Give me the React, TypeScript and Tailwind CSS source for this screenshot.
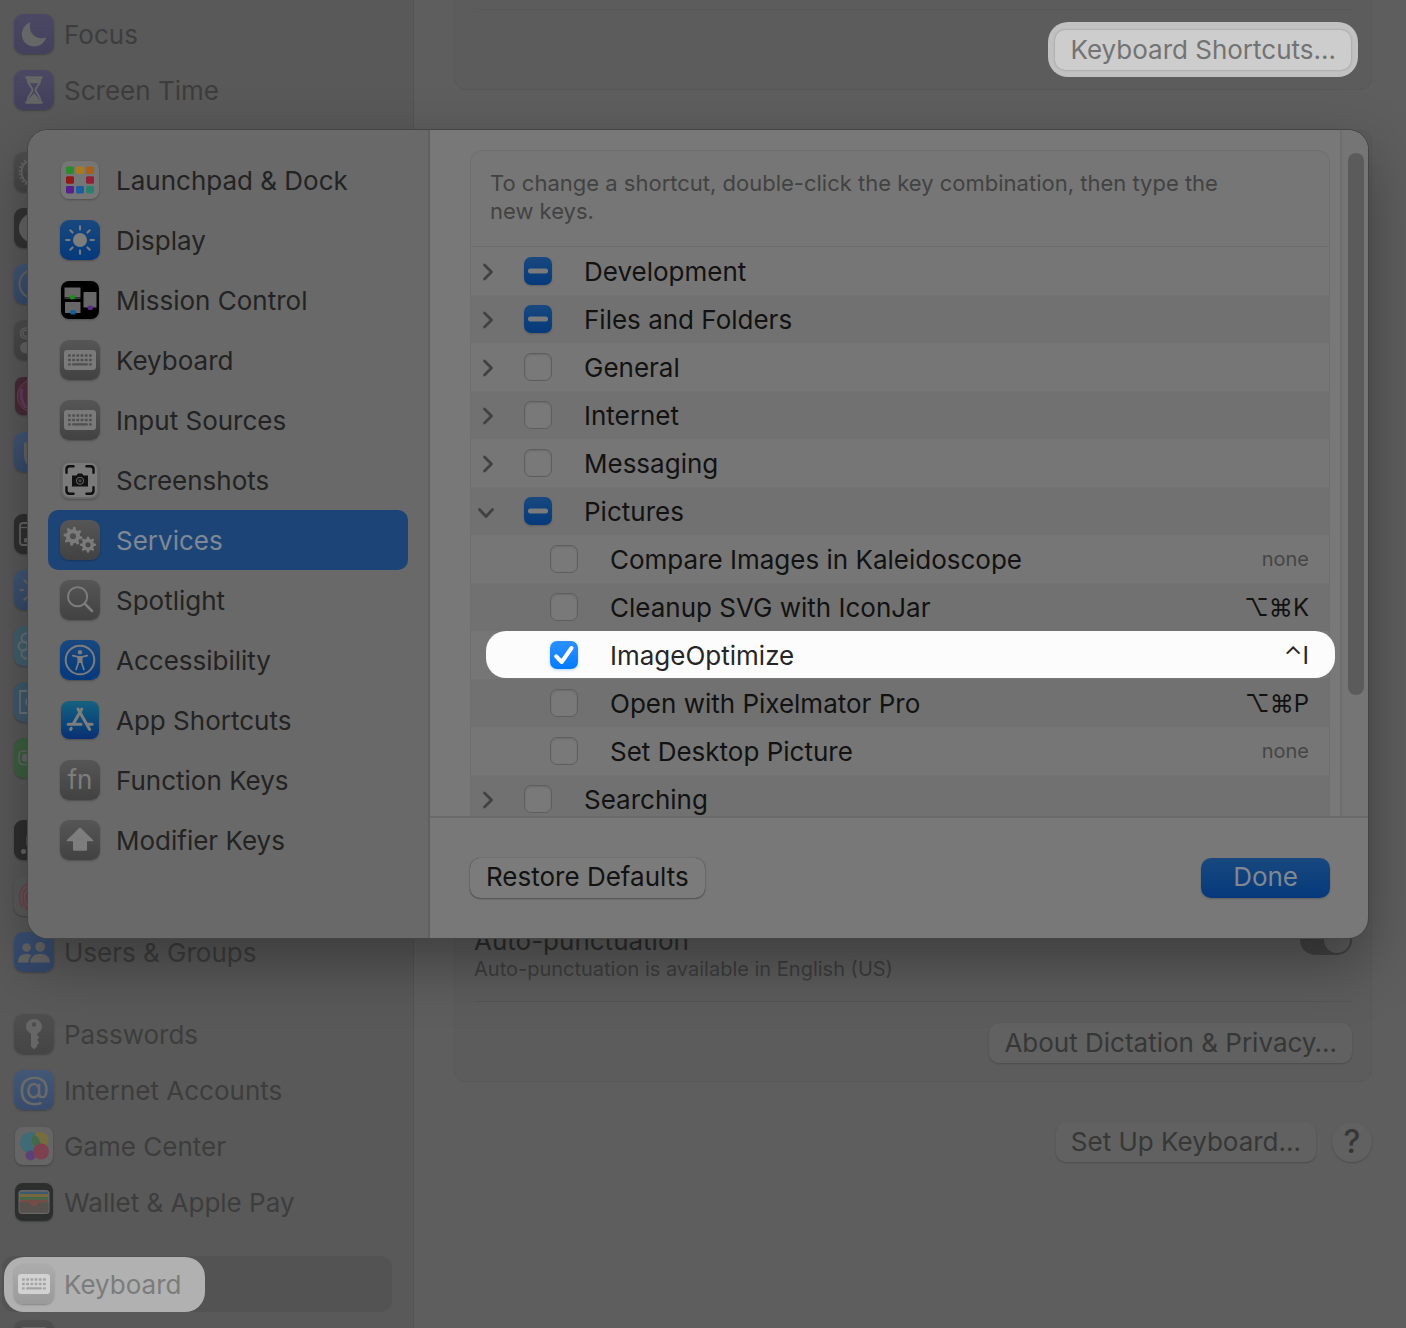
import { useEffect, useRef, useState } from "react";
import type { ReactNode } from "react";

/* ---------- icon glyphs, drawn on a 40 x 40 grid ---------- */

function Glyph({ children }: { children: ReactNode }) {
  return (
    <svg viewBox="0 0 40 40" className="size-10 shrink-0" fill="none" aria-hidden="true">
      {children}
    </svg>
  );
}

function Tile({ className, inset, children }: { className: string; inset?: boolean; children: ReactNode }) {
  return (
    <span
      className={`flex shrink-0 items-center justify-center shadow-[0_1px_2px_rgba(0,0,0,0.25)] ${
        inset ? "m-px size-[38px] rounded-lg" : "size-10 rounded-[9px]"
      } ${className}`}
    >
      {children}
    </span>
  );
}

const GREY = "bg-linear-to-b from-[#565656] to-[#424242]";
const BLUE = "bg-linear-to-b from-[#18487f] to-[#05397b]";
const DIM_BLUE = "bg-linear-to-b from-[#435777] to-[#384b6c]";
const DIM_GREY = "bg-linear-to-b from-[#4f4f4f] to-[#454545]";
const DIM_PURPLE = "bg-linear-to-b from-[#4b4864] to-[#43405c]";
const DIM_BLACK = "bg-[#343434]";
const DIM_CYAN = "bg-[#43606d]";

function KeyboardGlyph({ body, keys }: { body: string; keys: string }) {
  const cols = [8, 12.2, 16.4, 20.6, 24.8, 29];
  return (
    <Glyph>
      <rect x="4" y="10" width="32" height="20" rx="3" fill={body} />
      <g fill={keys}>
        {cols.map((x) => (
          <rect key={`a${x}`} x={x} y="14.3" width="2.8" height="2.4" rx="0.6" />
        ))}
        {cols.map((x) => (
          <rect key={`b${x}`} x={x} y="18.8" width="2.8" height="2.4" rx="0.6" />
        ))}
        <rect x="8" y="23.2" width="2.8" height="2.4" rx="0.6" />
        <rect x="12.2" y="23.2" width="15.6" height="2.4" rx="0.6" />
        <rect x="29" y="23.2" width="2.8" height="2.4" rx="0.6" />
      </g>
    </Glyph>
  );
}

function Sun({ color }: { color: string }) {
  return (
    <Glyph>
      <circle cx="20" cy="20" r="7" fill={color} />
      <g stroke={color} strokeWidth="2" strokeLinecap="round">
        {[0, 45, 90, 135, 180, 225, 270, 315].map((a) => (
          <path key={a} d="M20 9.5V6.2" transform={`rotate(${a} 20 20)`} />
        ))}
      </g>
    </Glyph>
  );
}

function Gear({ cx, cy, r, turn }: { cx: number; cy: number; r: number; turn: number }) {
  return (
    <g stroke="#7b7b7b">
      <circle cx={cx} cy={cy} r={r * 0.54} strokeWidth={r * 0.44} />
      {[0, 45, 90, 135, 180, 225, 270, 315].map((a) => (
        <path
          key={a}
          d={`M${cx} ${cy - r * 0.66}V${cy - r * 0.86}`}
          strokeWidth={r * 0.32}
          strokeLinecap="round"
          transform={`rotate(${a + turn} ${cx} ${cy})`}
        />
      ))}
    </g>
  );
}

function LaunchpadIcon() {
  const colors = [
    "#2b8a2c", "#a87a1c", "#a5601a",
    "#8f1a1a", "#74777a", "#8f2038",
    "#57208a", "#1b5da0", "#2a806c",
  ];
  return (
    <Tile inset className="bg-[#767676]">
      <Glyph>
        {colors.map((c, i) => (
          <rect key={c} x={6 + (i % 3) * 10} y={6.5 + Math.floor(i / 3) * 9.8} width="8" height="7.4" rx="1.4" fill={c} />
        ))}
      </Glyph>
    </Tile>
  );
}

function MissionControlIcon() {
  return (
    <Tile inset className="bg-black">
      <Glyph>
        <rect x="4.500" y="7.500" width="16" height="10" fill="#676767" />
        <rect x="5" y="22" width="15.500" height="11" fill="#676767" />
        <rect x="23.500" y="12" width="13" height="15.500" fill="#676767" />
        <rect x="4.500" y="18" width="16" height="1" fill="#3a3a3a" />
        <rect x="9.500" y="15" width="5.500" height="4.500" rx="2" fill="#218a1f" />
        <rect x="10.200" y="30" width="5.500" height="4.500" rx="1.500" fill="#165f99" />
        <rect x="27.500" y="25.500" width="5.500" height="4.500" rx="2" fill="#5c2a87" />
      </Glyph>
    </Tile>
  );
}

function ScreenshotsIcon() {
  return (
    <Tile inset className="border-2 border-[#676767] bg-[#7a7a7a]">
      <Glyph>
        <g stroke="#0f0f0f" strokeWidth="2.4" strokeLinecap="round">
          <path d="M13.500 6.300H9.500Q6.500 6.300 6.500 9.300V12.800" />
          <path d="M26.500 6.300H30.500Q33.500 6.300 33.500 9.300V12.800" />
          <path d="M13.500 33.700H9.500Q6.500 33.700 6.500 30.700V27.200" />
          <path d="M26.500 33.700H30.500Q33.500 33.700 33.500 30.700V27.200" />
        </g>
        <path d="M12 15.500h4.500l1.500-2h4l1.500 2H28V26.500H12Z" fill="#111" />
        <circle cx="20" cy="20.800" r="3.600" stroke="#6c6c6c" strokeWidth="1" />
        <circle cx="20" cy="20.800" r="1.600" fill="#4a4a4a" />
      </Glyph>
    </Tile>
  );
}

const W = "#7d7d7d";

const paneItems: { label: string; icon: ReactNode }[] = [
  { label: "Launchpad & Dock", icon: <LaunchpadIcon /> },
  { label: "Display", icon: <Tile className={BLUE}><Sun color={W} /></Tile> },
  { label: "Mission Control", icon: <MissionControlIcon /> },
  { label: "Keyboard", icon: <Tile className={GREY}><KeyboardGlyph body="#7a7a7a" keys="#505050" /></Tile> },
  { label: "Input Sources", icon: <Tile className={GREY}><KeyboardGlyph body="#7a7a7a" keys="#505050" /></Tile> },
  { label: "Screenshots", icon: <ScreenshotsIcon /> },
  {
    label: "Services",
    icon: (
      <Tile className={GREY}>
        <Glyph>
          <Gear cx={13} cy={16.300} r={9.400} turn={10} />
          <Gear cx={28} cy={24.700} r={8} turn={0} />
        </Glyph>
      </Tile>
    ),
  },
  {
    label: "Spotlight",
    icon: (
      <Tile className={GREY}>
        <Glyph>
          <circle cx="17.600" cy="16.700" r="9.600" stroke={W} strokeWidth="1.900" />
          <path d="M24.700 23.700L32 31" stroke={W} strokeWidth="2.600" strokeLinecap="round" />
        </Glyph>
      </Tile>
    ),
  },
  {
    label: "Accessibility",
    icon: (
      <Tile className={BLUE}>
        <Glyph>
          <circle cx="20" cy="20" r="14.300" stroke={W} strokeWidth="2" />
          <circle cx="20" cy="12.200" r="2.200" fill={W} />
          <path
            d="M12.800 15.600l5.200 1.300h4l5.200-1.300M18.400 17v5.500l-2.300 7M21.600 17v5.500l2.300 7"
            stroke={W}
            strokeWidth="1.700"
            strokeLinecap="round"
            strokeLinejoin="round"
          />
          <path d="M17.700 17h4.600v6h-4.600z" fill={W} />
        </Glyph>
      </Tile>
    ),
  },
  {
    label: "App Shortcuts",
    icon: (
      <Tile inset className="bg-linear-to-b from-[#17627f] to-[#0b2f74]">
        <Glyph>
          <g stroke={W} strokeWidth="3" strokeLinecap="round">
            <path d="M21.800 9L13.500 23.500" />
            <path d="M18 9L29.700 29.500" />
            <path d="M8.200 24.300H21" />
            <path d="M27.500 24.300H32" />
            <path d="M11.300 28.300L10.600 29.500" />
          </g>
        </Glyph>
      </Tile>
    ),
  },
  {
    label: "Function Keys",
    icon: (
      <Tile className={GREY}>
        <span className="text-[26px] leading-8 text-[#7d7d7d]">fn</span>
      </Tile>
    ),
  },
  {
    label: "Modifier Keys",
    icon: (
      <Tile className={GREY}>
        <Glyph>
          <path
            d="M20 7.200L33.300 20.300Q33.800 21.300 32.800 21.300H27V29.500Q27 30.700 25.800 30.700H14.200Q13 30.700 13 29.500V21.300H7.200Q6.200 21.300 6.700 20.300Z"
            fill={W}
          />
        </Glyph>
      </Tile>
    ),
  },
];

/* ---------- sidebar of the window behind the sheet ---------- */

const D = "#666666";

type SideItem = { id: string; label?: string; icon: ReactNode; current?: boolean };

const sideGroups: SideItem[][] = [
  [
    {
      id: "focus",
      label: "Focus",
      icon: (
        <Tile className={DIM_PURPLE}>
          <Glyph>
            <path
              d="M16.500 8.200C16 9.500 15.800 10.800 15.800 12.200C15.800 19 20.800 24.200 27.600 24.200C29.300 24.200 30.800 23.900 32.300 23.300C30.700 28.700 26 32.500 20.200 32.500C13.300 32.500 7.800 27 7.800 20.200C7.800 14.500 11.500 9.700 16.500 8.200Z"
              fill={D}
            />
          </Glyph>
        </Tile>
      ),
    },
    {
      id: "screen-time",
      label: "Screen Time",
      icon: (
        <Tile className={DIM_PURPLE}>
          <Glyph>
            <g stroke={D} strokeWidth="2" strokeLinejoin="round" strokeLinecap="round">
              <path d="M12.500 7.500H27.500M12.500 32.500H27.500" strokeWidth="2.600" />
              <path d="M13.500 8.500C13.500 15.500 18.500 17 18.500 20C18.500 23 13.500 24.500 13.500 31.500" />
              <path d="M26.500 8.500C26.500 15.500 21.500 17 21.500 20C21.500 23 26.500 24.500 26.500 31.500" />
            </g>
            <path d="M13.500 8.500h13q0 3-1.300 4.700H14.800Q13.500 11.500 13.500 8.500ZM20 19v4l-4 4.500q-1.500 1.800-1.500 4h11q0-2.200-1.500-4L20 23Z" fill={D} />
          </Glyph>
        </Tile>
      ),
    },
  ],
  [
    {
      id: "general",
      icon: (
        <Tile className={DIM_GREY}>
          <Glyph>
            <circle cx="20" cy="20" r="12.500" stroke={D} strokeWidth="1.800" />
            <circle cx="20" cy="20" r="14.500" stroke={D} strokeWidth="2" strokeDasharray="1.900 1.900" />
          </Glyph>
        </Tile>
      ),
    },
    { id: "appearance", icon: <Tile className={DIM_BLACK}><Glyph><circle cx="20" cy="20" r="15" fill={D} /></Glyph></Tile> },
    { id: "accessibility", icon: <Tile className={DIM_BLUE}><Glyph><circle cx="20" cy="20" r="14.500" stroke={D} strokeWidth="2" /></Glyph></Tile> },
    {
      id: "control-center",
      icon: (
        <Tile className={DIM_GREY}>
          <Glyph>
            <rect x="6.500" y="8" width="27" height="10.500" rx="5.200" stroke={D} strokeWidth="1.600" />
            <circle cx="12" cy="13.300" r="3" stroke={D} strokeWidth="1.500" />
            <rect x="6" y="22" width="28" height="11.500" rx="5.700" fill={D} />
          </Glyph>
        </Tile>
      ),
    },
    {
      id: "siri",
      icon: (
        <Tile inset className="bg-[#482b38]">
          <Glyph>
            <circle cx="20" cy="20" r="16.500" fill="#57303f" stroke="#6b4653" strokeWidth="1" />
            <path d="M8 13Q5 22 12 32" stroke="#5f4063" strokeWidth="3" />
          </Glyph>
        </Tile>
      ),
    },
    {
      id: "privacy",
      icon: (
        <Tile className={DIM_BLUE}>
          <Glyph>
            <path d="M12 12V24Q12 32 20 33" stroke={D} strokeWidth="4" strokeLinecap="round" />
          </Glyph>
        </Tile>
      ),
    },
  ],
  [
    {
      id: "desktop",
      icon: (
        <Tile className="bg-[#303030]">
          <Glyph>
            <rect x="6" y="9" width="28" height="22" rx="3" stroke={D} strokeWidth="1.800" />
            <path d="M6 13.500H34" stroke={D} strokeWidth="1.400" />
            <rect x="10" y="24" width="20" height="4.500" rx="1.500" fill={D} />
          </Glyph>
        </Tile>
      ),
    },
    { id: "displays", icon: <Tile className={DIM_BLUE}><Sun color={D} /></Tile> },
    {
      id: "wallpaper",
      icon: (
        <Tile className={DIM_CYAN}>
          <Glyph>
            <g stroke="#6b7377" strokeWidth="1.800">
              <circle cx="12" cy="12" r="4.500" />
              <circle cx="9" cy="20" r="4.500" />
              <circle cx="12" cy="28" r="4.500" />
            </g>
          </Glyph>
        </Tile>
      ),
    },
    {
      id: "screen-saver",
      icon: (
        <Tile className="bg-[#3f5a6c]">
          <Glyph>
            <path d="M20 9H6V31H20" stroke="#6b7377" strokeWidth="1.800" />
            <circle cx="16" cy="20" r="4" stroke="#6b7377" strokeWidth="1.600" />
          </Glyph>
        </Tile>
      ),
    },
    {
      id: "battery",
      icon: (
        <Tile className="bg-[#3d6040]">
          <Glyph>
            <rect x="5" y="13" width="28" height="13.500" rx="4" stroke={D} strokeWidth="1.700" />
            <rect x="8" y="16" width="20" height="7.500" rx="2" fill={D} />
          </Glyph>
        </Tile>
      ),
    },
  ],
  [
    {
      id: "lock-screen",
      icon: (
        <Tile className="bg-[#2f2f2f]">
          <Glyph>
            <rect x="12" y="14" width="16" height="13" rx="3" fill="#4a4a4a" />
            <circle cx="9.500" cy="31.500" r="2.500" fill={D} />
          </Glyph>
        </Tile>
      ),
    },
    {
      id: "touch-id",
      icon: (
        <Tile className="bg-[#5b5b5b]">
          <Glyph>
            <g stroke="#7a3c48" strokeWidth="1.300" strokeLinecap="round">
              <path d="M14 7Q5 13 5.500 21Q5.500 27 8 30" />
              <path d="M16 10Q8.500 14 9 21Q9 28 13 33" />
              <path d="M18 13Q12 16 12.300 21Q12.500 28 17 33" />
            </g>
          </Glyph>
        </Tile>
      ),
    },
    {
      id: "users",
      label: "Users & Groups",
      icon: (
        <Tile className="bg-linear-to-b from-[#3c5174] to-[#33486c]">
          <Glyph>
            <g fill="#666666">
              <circle cx="12.600" cy="15.500" r="4.300" />
              <path d="M4 30.500Q4 22 12.500 21.700Q15.500 21.700 17.500 23.200Q14.500 26 14.300 30.500Z" />
              <circle cx="26.200" cy="14.800" r="4.900" />
              <path d="M16 30.500Q17 21.800 26 21.800Q35 21.800 36 29.500Q36 30.500 35 30.500Z" />
            </g>
          </Glyph>
        </Tile>
      ),
    },
  ],
  [
    {
      id: "passwords",
      label: "Passwords",
      icon: (
        <Tile className={DIM_GREY}>
          <Glyph>
            <path
              fillRule="evenodd"
              d="M20 5C24.500 5 28 8.300 28 12.500C28 15.700 26.200 18.300 23.300 19.500V21.500L25.300 23.500L23 26L25.300 28.700L23 31V32.500L20 35.200L17 32.500V19.500C14 18.300 12 15.700 12 12.500C12 8.300 15.500 5 20 5ZM20 8.300A2.200 2.200 0 1 0 20 12.700A2.200 2.200 0 1 0 20 8.300Z"
              fill={D}
            />
          </Glyph>
        </Tile>
      ),
    },
    {
      id: "internet-accounts",
      label: "Internet Accounts",
      icon: (
        <Tile className={DIM_BLUE}>
          <span className="pb-1 text-[32px] leading-9 text-[#6a6a6a]">@</span>
        </Tile>
      ),
    },
    {
      id: "game-center",
      label: "Game Center",
      icon: (
        <Tile inset className="bg-[#656565]">
          <Glyph>
            <circle cx="16.500" cy="16.500" r="10.500" fill="#3f6a78" />
            <circle cx="26" cy="14.500" r="8.500" fill="#776c3e" />
            <path d="M20 8.500Q27 12 26.500 20Q20 22 17.800 17Q17 12 20 8.500Z" fill="#42694c" />
            <circle cx="16.500" cy="29.500" r="5" fill="#5c4177" />
            <circle cx="27" cy="25.500" r="8" fill="#7c404e" />
          </Glyph>
        </Tile>
      ),
    },
    {
      id: "wallet",
      label: "Wallet & Apple Pay",
      icon: (
        <Tile inset className="bg-[#2d2e2e]">
          <Glyph>
            <rect x="4.500" y="8" width="31" height="24" rx="3.500" fill="#666666" />
            <rect x="6" y="9.700" width="28" height="4" rx="1" fill="#3c5a70" />
            <rect x="6" y="12" width="28" height="3.500" fill="#75683f" />
            <rect x="6" y="15" width="28" height="3.500" fill="#456747" />
            <rect x="6" y="17.700" width="28" height="3" fill="#754c46" />
            <path d="M5.500 20H13.500Q15.500 20 16.500 22Q20 26 23.500 22Q24.500 20 26.500 20H34.500V29Q34.500 30.700 33 30.700H7Q5.500 30.700 5.500 29Z" fill="#56514d" />
            <path d="M14 20H26Q24.500 20.500 23.500 22Q20 26 16.500 22Q15.500 20.500 14 20Z" fill="#754c46" />
          </Glyph>
        </Tile>
      ),
    },
  ],
  [
    {
      id: "keyboard",
      label: "Keyboard",
      current: true,
      icon: (
        <Tile className="bg-linear-to-b from-[#acacac] to-[#9a9a9a]">
          <KeyboardGlyph body="#d2d2d2" keys="#a3a3a3" />
        </Tile>
      ),
    },
    {
      id: "trackpad",
      icon: (
        <Tile className={DIM_GREY}>
          <Glyph>
            <rect x="6" y="7" width="28" height="26" rx="4" fill={D} />
          </Glyph>
        </Tile>
      ),
    },
  ],
];

function SideRow({ item }: { item: SideItem }) {
  const label = <span className="pt-0.5">{item.label}</span>;
  if (item.current) {
    return (
      <a
        href="#keyboard"
        aria-current="page"
        className="mr-[21px] ml-0.5 flex h-14 items-center rounded-xl bg-[#535353]"
      >
        <span className="ml-0.5 flex h-[55px] items-center gap-2.5 rounded-[20px] bg-[#b1b1b1] pr-6 pl-2.5 text-[#7c7c7c]">
          {item.icon}
          {label}
        </span>
      </a>
    );
  }
  return (
    <a href={`#${item.id}`} aria-label={item.label ?? item.id} className="flex h-14 items-center gap-2.5 pl-3.5">
      {item.icon}
      {label}
    </a>
  );
}

function WindowSidebar() {
  return (
    <nav className="flex w-[414px] shrink-0 flex-col gap-[26px] border-r border-[#535353] bg-[#595959] pt-1.5 text-[#3d3d3d]">
      {sideGroups.map((group) => (
        <div key={group[0].id} className="flex flex-col">
          {group.map((item) => (
            <SideRow key={item.id} item={item} />
          ))}
        </div>
      ))}
    </nav>
  );
}

/* ---------- content of the window behind the sheet ---------- */

const DIM_BUTTON =
  "h-10 bg-[#616161] text-[#373737] shadow-[0_1px_2px_rgba(0,0,0,0.2)]";

function WindowContent() {
  return (
    <main className="flex min-w-0 flex-1 flex-col bg-[#5e5e5e] pr-[34px] pl-10">
      <section className="rounded-b-xl border border-t-0 border-[#595959] bg-[#5c5c5c] px-[19px] pt-[9px] pb-3">
        <div className="mb-3 border-t border-[#585858]" />
        <div className="-mr-1.5 flex justify-end">
          <div className="rounded-[20px] bg-[#c1c1c1] px-[7px] pt-2 pb-[7px]">
            <button
              type="button"
              className="flex h-10 items-center rounded-[10px] bg-[#cdcdcd] px-[15px] text-[#737373] shadow-[0_0_2px_rgba(0,0,0,0.3)]"
            >
              Keyboard Shortcuts…
            </button>
          </div>
        </div>
      </section>

      <section className="mt-10 rounded-xl border border-[#595959] bg-[#5c5c5c] px-[19px] pt-[794px] pb-[18px]">
        <div className="flex items-start justify-between">
          <div>
            <p className="leading-8 text-[#2c2c2c]">Auto-punctuation</p>
            <p className="text-[20px] leading-6 text-[#3d3d3d]">Auto-punctuation is available in English (US)</p>
          </div>
          <button
            type="button"
            role="switch"
            aria-checked="true"
            aria-label="Auto-punctuation"
            className="flex h-[30px] w-[52px] justify-end rounded-full bg-[#424242] p-0.5"
          >
            <span className="size-[26px] rounded-full bg-[#5c5c5c]" />
          </button>
        </div>
        <div className="mt-5 mb-[21px] border-t border-[#555555]" />
        <div className="flex justify-end">
          <button type="button" className={`${DIM_BUTTON} rounded-[10px] px-[15px]`}>
            About Dictation &amp; Privacy…
          </button>
        </div>
      </section>

      <div className="mt-10 flex justify-end gap-4">
        <button type="button" className={`${DIM_BUTTON} rounded-[10px] px-[15px]`}>
          Set Up Keyboard…
        </button>
        <button type="button" aria-label="Help" className={`${DIM_BUTTON} w-10 rounded-full text-[32px] leading-10 font-medium`}>
          ?
        </button>
      </div>
    </main>
  );
}

/* ---------- shortcuts sheet ---------- */

type Check = "on" | "off" | "mixed";
type Row = { label: string; check: Check; open?: boolean; child?: boolean; keys?: string; bright?: boolean };

const rows: Row[] = [
  { label: "Development", check: "mixed" },
  { label: "Files and Folders", check: "mixed" },
  { label: "General", check: "off" },
  { label: "Internet", check: "off" },
  { label: "Messaging", check: "off" },
  { label: "Pictures", check: "mixed", open: true },
  { label: "Compare Images in Kaleidoscope", check: "off", child: true },
  { label: "Cleanup SVG with IconJar", check: "off", child: true, keys: "⌥⌘K" },
  { label: "ImageOptimize", check: "on", child: true, keys: "⌃I", bright: true },
  { label: "Open with Pixelmator Pro", check: "off", child: true, keys: "⌥⌘P" },
  { label: "Set Desktop Picture", check: "off", child: true },
  { label: "Searching", check: "off" },
];

function CheckBox({ id, initial, bright }: { id: string; initial: Check; bright?: boolean }) {
  const [state, setState] = useState<Check>(initial);
  const ref = useRef<HTMLInputElement>(null);
  useEffect(() => {
    if (ref.current) ref.current.indeterminate = state === "mixed";
  }, [state]);

  const fill =
    state === "off"
      ? "border border-[#5e5e5e] bg-[#797979] shadow-[inset_0_1px_2px_rgba(0,0,0,0.12)]"
      : bright
        ? "bg-linear-to-b from-[#2b91ff] to-[#007aff] shadow-[0_1px_3px_rgba(0,122,255,0.3)]"
        : "bg-linear-to-b from-[#18487f] to-[#05397b] shadow-[0_1px_2px_rgba(0,0,0,0.2)]";

  return (
    <span className="grid size-7 shrink-0">
      <input
        ref={ref}
        id={id}
        type="checkbox"
        checked={state === "on"}
        onChange={() => setState(state === "on" ? "off" : "on")}
        className={`col-start-1 row-start-1 size-7 appearance-none rounded-[7px] ${fill}`}
      />
      {state !== "off" && (
        <svg viewBox="0 0 28 28" className="pointer-events-none col-start-1 row-start-1 size-7" fill="none" aria-hidden="true">
          {state === "mixed" ? (
            <rect x="4" y="11.500" width="20" height="5" rx="2.300" fill="#7b7b7b" />
          ) : (
            <path d="M6.200 15.300L11.700 21L21.500 7" stroke="#fff" strokeWidth="4" strokeLinecap="round" strokeLinejoin="round" />
          )}
        </svg>
      )}
    </span>
  );
}

function ShortcutRow({ row, index }: { row: Row; index: number }) {
  const id = `service-${index}`;
  return (
    <li
      className={`relative flex h-12 items-center pr-5 ${index % 2 ? "bg-[#717171]" : ""} ${
        row.bright ? "text-[#262626]" : "text-[#121212]"
      } ${row.child ? "pl-[79px]" : "pl-[5px]"}`}
    >
      {row.bright && <span className="absolute top-0 -right-1.5 bottom-px left-[15px] rounded-[20px] bg-[#fcfcfc]" />}
      {!row.child && (
        <button type="button" aria-expanded={!!row.open} aria-label={row.label} className="mr-6 size-6 shrink-0">
          <svg viewBox="0 0 24 24" className="size-6" fill="none" stroke="#414141" strokeWidth="2.800" strokeLinecap="round" strokeLinejoin="round">
            <path d={row.open ? "M3.500 10.500L10 17.500L16.500 10.500" : "M8.500 6L15.500 13L8.500 20"} />
          </svg>
        </button>
      )}
      <span className="relative flex min-w-0 flex-1 items-center">
        <CheckBox id={id} initial={row.check} bright={row.bright} />
        <label htmlFor={id} className="flex-1 truncate pt-0.5 pl-8 leading-8">
          {row.label}
        </label>
        {row.child &&
          (row.keys ? (
            <kbd className="pt-0.5 font-[Inter,'DejaVu_Sans',sans-serif] text-[24px] leading-8">{row.keys}</kbd>
          ) : (
            <span className="text-[20px] leading-8 text-[#454545]">none</span>
          ))}
      </span>
    </li>
  );
}

function Sheet() {
  return (
    <div
      role="dialog"
      aria-label="Keyboard shortcuts"
      className="absolute top-[130px] right-[38px] left-7 flex overflow-hidden rounded-[20px] bg-[#787878] shadow-[0_0_0_1px_#454545,0_24px_60px_rgba(0,0,0,0.34)]"
    >
      <nav className="w-[402px] shrink-0 border-r-2 border-[#606060] bg-[#696969] px-5 pt-5 text-[#232323]">
        {paneItems.map((item) => {
          const selected = item.label === "Services";
          return (
            <a
              key={item.label}
              href={`#pane-${item.label}`}
              aria-current={selected ? "true" : undefined}
              className={`flex h-[60px] items-center gap-4 rounded-[10px] pl-3 ${selected ? "bg-[#1d4477] text-[#7f8894]" : ""}`}
            >
              {item.icon}
              <span className="pt-0.5">{item.label}</span>
            </a>
          );
        })}
      </nav>

      <div className="flex min-w-0 flex-1 flex-col">
        <div className="flex h-[686px] overflow-hidden">
          <div className="min-w-0 flex-1 pt-5 pr-2.5 pl-10">
            <div className="rounded-t-xl border border-[#6f6f6f] bg-[#767676]">
              <p className="border-b border-[#6c6c6c] pt-[18px] pr-20 pb-[21px] pl-[19px] text-[22px] leading-7 text-[#424242]">
                To change a shortcut, double-click the key combination, then type the new keys.
              </p>
              <ul>
                {rows.map((row, i) => (
                  <ShortcutRow key={row.label} row={row} index={i} />
                ))}
              </ul>
            </div>
          </div>
          <div className="w-7 shrink-0 border-l-2 border-[#6e6e6e] bg-[#757575] pt-[23px] pl-1.5">
            <div className="h-[542px] w-4 rounded-full bg-[#5b5b5b]" />
          </div>
        </div>
        <div className="flex items-center justify-between border-t-2 border-[#6b6b6b] py-10 pr-[38px] pl-10">
          <button
            type="button"
            className="h-10 rounded-[10px] bg-[#7b7b7b] px-4 pb-0.5 text-[#121212] shadow-[0_0_1px_rgba(0,0,0,0.5),0_1px_2px_rgba(0,0,0,0.3)]"
          >
            Restore Defaults
          </button>
          <button
            type="button"
            className="h-10 rounded-[10px] bg-linear-to-b from-[#18487f] to-[#05397b] px-8 pb-0.5 text-[#808890] shadow-[0_1px_2px_rgba(0,0,0,0.2)]"
          >
            Done
          </button>
        </div>
      </div>
    </div>
  );
}

export default function App() {
  return (
    <div className="relative flex h-screen overflow-hidden bg-[#5e5e5e] font-[Inter,'DejaVu_Sans',sans-serif] text-[26px] leading-8">
      <WindowSidebar />
      <WindowContent />
      <Sheet />
    </div>
  );
}
